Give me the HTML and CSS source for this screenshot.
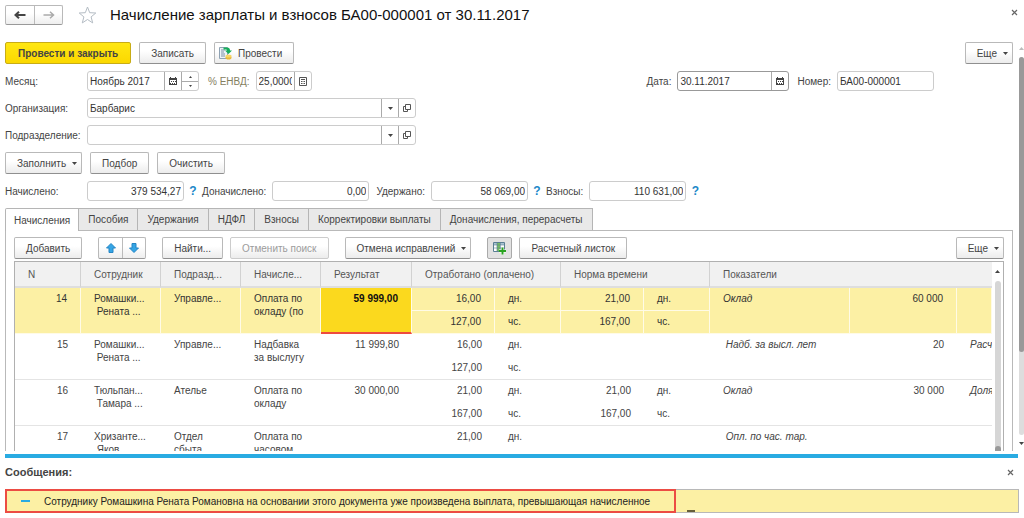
FILE: index.html
```html
<!DOCTYPE html>
<html lang="ru">
<head>
<meta charset="utf-8">
<title>Начисление зарплаты и взносов</title>
<link rel="stylesheet" href="styles.css">
</head>
<body>
<svg class="defs" aria-hidden="true">
  <symbol id="calendar" viewBox="0 0 8 8"><path d="M0 1h8v7H0z" fill="#444"/><path d="M1 0h1v2H1zM6 0h1v2H6z" fill="#444"/><path d="M1 3h6v4H1z" fill="#fff"/><path d="M2 4h1v1H2zM4 4h1v1H4zM6 4h1v1H6zM1 6h1v1H1zM3 6h1v1H3zM5 6h1v1H5z" fill="#444"/></symbol>
  <symbol id="open" viewBox="0 0 8 8"><path d="M2.500 .5h5v5h-5zM2.500 2.500h-2v5h4v-2" fill="none" stroke="#555"/></symbol>
  <symbol id="caret" viewBox="0 0 5 3"><path d="M0 0h5L2.500 3z" fill="#444"/></symbol>
  <symbol id="close" viewBox="0 0 7 7"><path d="M1 1l5 5M6 1L1 6" stroke="#666" stroke-width="1.200"/></symbol>
</svg>
<div class="app">
  <header class="titlebar">
    <div class="pair nav">
      <button type="button" aria-label="Назад"><svg width="12" height="8" viewBox="0 0 12 8"><path d="M11.500 4H2M5 .8L1.500 4 5 7.200" fill="none" stroke="#444" stroke-width="2"/></svg></button>
      <button type="button" aria-label="Вперед"><svg width="12" height="8" viewBox="0 0 12 8"><path d="M.5 4H10M7 .8L10.500 4 7 7.200" fill="none" stroke="#aaa" stroke-width="1.500"/></svg></button>
    </div>
    <button type="button" class="plain star" aria-label="Избранное"><svg width="19" height="18" viewBox="0 0 19 18"><path d="M9.500 1l2.200 5.700 6.100.3-4.700 3.900 1.600 6-5.200-3.400-5.200 3.400 1.600-6L1.200 7l6.100-.3z" fill="#fff" stroke="#b4bcc4"/></svg></button>
    <h1>Начисление зарплаты и взносов БА00-000001 от 30.11.2017</h1>
    <button type="button" class="plain close" aria-label="Закрыть"><svg width="7" height="7"><use href="#close"/></svg></button>
  </header>

  <div class="workspace">
    <main class="form">
      <div class="row commands">
        <button type="button" class="btn primary">Провести и закрыть</button>
        <button type="button" class="btn">Записать</button>
        <button type="button" class="btn post"><svg width="13" height="14" viewBox="0 0 13 14"><path d="M.5 1.500h8v11h-8z" fill="#eef3f7" stroke="#8fa2b3"/><path d="M2 4h4M2 6h3M2 8h4M2 10h4" stroke="#7d91a5"/><path d="M4.500 1.500h3.500q3 0 3 3h2L9.500 8 6 4.500h2q0-1-1-1H4.500z" fill="#16ad5b"/><ellipse cx="9.500" cy="11.500" rx="3" ry="2" fill="#e9b83a"/><ellipse cx="9.500" cy="10" rx="3" ry="1.500" fill="#f7d665"/></svg>Провести</button>
        <button type="button" class="btn more push">Еще<svg width="5" height="3"><use href="#caret"/></svg></button>
      </div>

      <div class="row fields">
        <label class="lead" for="month">Месяц:</label>
        <div class="field month"><input id="month" value="Ноябрь 2017"><button type="button" aria-label="Календарь"><svg width="8" height="8"><use href="#calendar"/></svg></button><div class="spin"><button type="button" aria-label="Больше"><svg width="3" height="2" viewBox="0 0 3 2"><path d="M0 2h3L1.500 0z" fill="#444"/></svg></button><button type="button" aria-label="Меньше"><svg width="3" height="2" viewBox="0 0 3 2"><path d="M0 0h3L1.500 2z" fill="#444"/></svg></button></div></div>
        <label class="tax" for="tax">% ЕНВД:</label>
        <div class="field rate"><input id="tax" value="25,0000"><button type="button" aria-label="Калькулятор"><svg width="8" height="9" viewBox="0 0 8 9"><path d="M.5.5h7v8h-7z" fill="#fff" stroke="#555"/><path d="M2 2h4v1H2zM2 4h1v1H2zM3.500 4h1v1h-1zM5 4h1v1H5zM2 6h1v1H2zM3.500 6h1v1h-1zM5 6h1v1H5z" fill="#555"/></svg></button></div>
        <div class="docid">
          <label for="date">Дата:</label>
          <div class="field date"><input id="date" value="30.11.2017"><button type="button" aria-label="Календарь"><svg width="8" height="8"><use href="#calendar"/></svg></button></div>
          <label for="number">Номер:</label>
          <div class="field number"><input id="number" value="БА00-000001"></div>
        </div>
      </div>

      <div class="row">
        <label class="lead" for="org">Организация:</label>
        <div class="field wide"><input id="org" value="Барбарис"><button type="button" aria-label="Выбрать"><svg width="5" height="3"><use href="#caret"/></svg></button><button type="button" aria-label="Открыть"><svg width="8" height="8"><use href="#open"/></svg></button></div>
      </div>
      <div class="row">
        <label class="lead" for="dept">Подразделение:</label>
        <div class="field wide"><input id="dept"><button type="button" aria-label="Выбрать"><svg width="5" height="3"><use href="#caret"/></svg></button><button type="button" aria-label="Открыть"><svg width="8" height="8"><use href="#open"/></svg></button></div>
      </div>

      <div class="row actions">
        <button type="button" class="btn more">Заполнить<svg width="5" height="3"><use href="#caret"/></svg></button>
        <button type="button" class="btn">Подбор</button>
        <button type="button" class="btn">Очистить</button>
      </div>

      <div class="row totals">
        <label class="lead" for="t1">Начислено:</label>
        <div class="field sum"><input id="t1" value="379 534,27"></div><button type="button" class="plain help">?</button>
        <label for="t2">Доначислено:</label>
        <div class="field sum last"><input id="t2" value="0,00"></div>
        <label for="t3">Удержано:</label>
        <div class="field sum"><input id="t3" value="58 069,00"></div><button type="button" class="plain help">?</button>
        <label for="t4">Взносы:</label>
        <div class="field sum"><input id="t4" value="110 631,00"></div><button type="button" class="plain help">?</button>
      </div>

      <div class="tabs" role="tablist">
        <button type="button" role="tab" aria-selected="true">Начисления</button>
        <button type="button" role="tab">Пособия</button>
        <button type="button" role="tab">Удержания</button>
        <button type="button" role="tab">НДФЛ</button>
        <button type="button" role="tab">Взносы</button>
        <button type="button" role="tab">Корректировки выплаты</button>
        <button type="button" role="tab">Доначисления, перерасчеты</button>
      </div>

      <section class="panel" role="tabpanel">
        <div class="toolbar">
          <button type="button" class="btn">Добавить</button>
          <div class="pair move">
            <button type="button" aria-label="Вверх"><svg width="10" height="10" viewBox="0 0 10 10"><path d="M5 .5L9.500 5H7v4.500H3V5H.5z" fill="#35a5e5" stroke="#2585c4"/></svg></button>
            <button type="button" aria-label="Вниз"><svg width="10" height="10" viewBox="0 0 10 10"><path d="M5 9.500L9.500 5H7V.5H3V5H.5z" fill="#35a5e5" stroke="#2585c4"/></svg></button>
          </div>
          <div class="group">
            <button type="button" class="btn">Найти...</button>
            <button type="button" class="btn" disabled>Отменить поиск</button>
          </div>
          <button type="button" class="btn more">Отмена исправлений<svg width="5" height="3"><use href="#caret"/></svg></button>
          <div class="group">
            <button type="button" class="btn toggle" aria-label="Показать колонки" aria-pressed="true"><svg width="14" height="13" viewBox="0 0 14 13"><path d="M.5.5h11v9H.5z" fill="#fff" stroke="#5a7f94"/><path d="M1 1h10v2H1z" fill="#a9c3d2"/><path d="M4 1h3v8H4z" fill="#76bd62"/><path d="M4 0v10M7.500 0v10M0 3h12M0 6h12" stroke="#5a7f94" stroke-width=".6"/><path d="M9.500 5.500v7M6 9h7" stroke="#fff" stroke-width="3"/><path d="M9.500 5.500v7M6 9h7" stroke="#2aa321" stroke-width="2"/></svg></button>
            <button type="button" class="btn">Расчетный листок</button>
          </div>
          <button type="button" class="btn more push">Еще<svg width="5" height="3"><use href="#caret"/></svg></button>
        </div>

        <div class="grid">
          <div class="gridview">
            <table>
              <colgroup><col class="c-n"><col class="c-name"><col class="c-name"><col class="c-name"><col class="c-result"><col class="c-qty"><col class="c-unit"><col class="c-qty"><col class="c-unit"><col class="c-ind"><col class="c-val"><col></colgroup>
              <thead><tr><th>N</th><th>Сотрудник</th><th>Подразд...</th><th>Начисле...</th><th>Результат</th><th colspan="2">Отработано (оплачено)</th><th colspan="2">Норма времени</th><th colspan="3">Показатели</th></tr></thead>
              <tbody class="selected">
                <tr><td rowspan="2" class="num">14</td><td rowspan="2">Ромашки...<br>&nbsp;Рената ...</td><td rowspan="2">Управле...</td><td rowspan="2">Оплата по<br>окладу (по</td><td rowspan="2" class="num current">59 999,00</td><td class="num">16,00</td><td>дн.</td><td class="num">21,00</td><td>дн.</td><td rowspan="2" class="ind">Оклад</td><td rowspan="2" class="num">60 000</td><td rowspan="2"></td></tr>
                <tr><td class="num">127,00</td><td>чс.</td><td class="num">167,00</td><td>чс.</td></tr>
              </tbody>
              <tbody>
                <tr><td rowspan="2" class="num">15</td><td rowspan="2">Ромашки...<br>&nbsp;Рената ...</td><td rowspan="2">Управле...</td><td rowspan="2">Надбавка<br>за выслугу</td><td rowspan="2" class="num">11 999,80</td><td class="num">16,00</td><td>дн.</td><td></td><td></td><td rowspan="2" class="ind">&nbsp;Надб. за высл. лет</td><td rowspan="2" class="num">20</td><td rowspan="2" class="ind">Расчетный</td></tr>
                <tr><td class="num">127,00</td><td>чс.</td><td></td><td></td></tr>
              </tbody>
              <tbody>
                <tr><td rowspan="2" class="num">16</td><td rowspan="2">Тюльпан...<br>&nbsp;Тамара ...</td><td rowspan="2">Ателье</td><td rowspan="2">Оплата по<br>окладу</td><td rowspan="2" class="num">30 000,00</td><td class="num">21,00</td><td>дн.</td><td class="num">21,00</td><td>дн.</td><td rowspan="2" class="ind">Оклад</td><td rowspan="2" class="num">30 000</td><td rowspan="2" class="ind">Доля</td></tr>
                <tr><td class="num">167,00</td><td>чс.</td><td class="num">167,00</td><td>чс.</td></tr>
              </tbody>
              <tbody>
                <tr><td rowspan="2" class="num">17</td><td rowspan="2">Хризанте...<br>&nbsp;Яков ...</td><td rowspan="2">Отдел<br>сбыта</td><td rowspan="2">Оплата по<br>часовом</td><td rowspan="2"></td><td class="num">21,00</td><td>дн.</td><td></td><td></td><td rowspan="2" class="ind">&nbsp;Опл. по час. тар.</td><td rowspan="2"></td><td rowspan="2"></td></tr>
                <tr><td></td><td></td><td></td><td></td></tr>
              </tbody>
            </table>
          </div>
          <div class="gridscroll"><svg width="5" height="3" viewBox="0 0 5 3"><path d="M0 3h5L2.500 0z" fill="#444"/></svg><div class="track"><div class="thumb"></div></div></div>
        </div>
      </section>
    </main>
    <div class="pagescroll"><svg width="5" height="3" viewBox="0 0 5 3"><path d="M0 3h5L2.500 0z" fill="#bbb"/></svg><div class="track"><div class="thumb"></div></div><svg width="5" height="3"><use href="#caret"/></svg></div>
  </div>

  <div class="splitter"></div>

  <section class="messages">
    <div class="messagehead"><h2>Сообщения:</h2><button type="button" class="plain close" aria-label="Закрыть сообщения"><svg width="7" height="7"><use href="#close"/></svg></button></div>
    <div class="message"><p><span class="dash"></span>Сотруднику Ромашкина Рената Романовна на основании этого документа уже произведена выплата, превышающая начисленное</p><span class="tick"></span></div>
  </section>
</div>
</body>
</html>
```
FILE: styles.css
```css
* { box-sizing: border-box; }
body { margin: 0; background: #fff; color: #444; font: 10px/13px "Liberation Sans", Arial, sans-serif; }
button, input { font: inherit; color: inherit; margin: 0; padding: 0; }
button { display: flex; align-items: center; justify-content: center; background: none; border: 0; white-space: nowrap; }
svg { flex: none; display: block; }
.defs { position: absolute; width: 0; height: 0; }
.app { display: flex; flex-direction: column; height: 100vh; overflow: hidden; }

.titlebar { display: flex; align-items: center; height: 30px; padding: 0 6px 0 5px; flex: none; }
h1 { margin: 0 0 0 13px; font-size: 15px; line-height: 20px; font-weight: 400; color: #111; flex: 1; white-space: nowrap; }
.star { margin-left: 15px; }
.titlebar .close { align-self: flex-start; margin-top: 9px; }

.pair { display: flex; border: 1px solid #b9b9b9; border-radius: 2px; border-bottom-color: #999; background: linear-gradient(#fff 40%, #eee); height: 22px; }
.pair button { width: 23px; }
.pair button + button { border-left: 1px solid #bbb; }
.nav { height: 20px; }
.nav button { width: 28px; }

.workspace { flex: 1; min-height: 0; display: flex; overflow: hidden; margin-bottom: 3px; }
.form { flex: 1; min-width: 0; display: flex; flex-direction: column; padding: 12px 6px 0 5px; }
.row { display: flex; align-items: center; height: 20px; margin-bottom: 7px; flex: none; }
.commands, .actions { height: 22px; gap: 8px; }
.push { margin-left: auto; }

.btn { height: 22px; padding: 0 11px; border: 1px solid #b9b9b9; border-bottom-color: #8f8f8f; border-radius: 2px; background: linear-gradient(#fff 40%, #ececec); flex: none; }
.btn.primary { padding: 0 12px; background: linear-gradient(#ffe712, #fbd800); border-color: #c8ac16; font-weight: 700; }
.btn.more { gap: 6px; padding-right: 4px; }
.btn.post { gap: 6px; padding-left: 4px; }
.btn:disabled { color: #9c9c9c; border-color: #ccc; }
.btn.toggle { width: 25px; padding: 0; background: #e2e2e2; border-color: #aaa; }

.lead { width: 82px; flex: none; white-space: nowrap; }
.field { display: flex; height: 20px; border: 1px solid #ccc; border-radius: 3px; background: #fff; color: #333; }
.field input { flex: 1; width: 0; min-width: 0; border: 0; outline: 0; background: none; padding: 0 2px; }
.field > button { width: 17px; border-left: 1px solid #aaa; }
.month { width: 112px; }
.spin { width: 17px; display: grid; grid-template-rows: 1fr 1fr; border-left: 1px solid #aaa; }
.spin button + button { border-top: 1px solid #aaa; }
.tax { color: #85805f; margin: 0 6px 0 9px; }
.rate { width: 56px; }
.docid { display: flex; align-items: center; margin-left: auto; margin-right: 79px; }
.docid label { margin-right: 6px; }
.date { width: 112px; margin-right: 8px; border-color: #999; }
.number { width: 97px; }
.wide { width: 329px; }
.sum { width: 97px; }
.sum input { text-align: right; }
.sum.last { margin-right: 7px; }
.totals label:not(.lead) { margin-right: 6px; }
.help { width: 18px; color: #2087c8; font-size: 12px; font-weight: 700; }

.tabs { display: flex; flex: none; }
.tabs button { height: 22px; padding: 0 9px; background: #e9e9e9; border: 1px solid #b5b5b5; border-left: 0; border-bottom: 0; }
.tabs button[aria-selected] { padding: 0 8px; background: #fff; border-left: 1px solid #b5b5b5; height: 23px; margin-bottom: -1px; border-radius: 2px 0 0; z-index: 1; }
.panel { flex: none; border: 1px solid #b9b9b9; border-bottom: 0; padding: 6px 8px 0; }
.toolbar { display: flex; gap: 16px; height: 22px; margin-bottom: 2px; }
.group { display: flex; gap: 7px; }

.grid { display: flex; border: 1px solid #b0b0b0; border-bottom: 0; }
.gridview { flex: 1; min-width: 0; overflow: hidden; }
table { width: 100%; table-layout: fixed; border-collapse: separate; border-spacing: 0; }
.c-n, .c-unit { width: 66px; }
.c-name { width: 80px; }
.c-result { width: 91px; }
.c-qty { width: 83px; }
.c-ind { width: 140px; }
.c-val { width: 107px; }
th { height: 26px; padding: 0 0 0 13px; text-align: left; font-weight: 400; color: #555; background: #f1f1f1; border-right: 1px solid #d2d2d2; border-bottom: 2px solid #dedede; white-space: nowrap; }
th:last-child { border-right: 0; }
td { height: 23px; padding: 4px 0 0 13px; vertical-align: top; white-space: nowrap; overflow: hidden; }
td[rowspan] { height: 46px; border-bottom: 1px solid #e4e4e4; }
tr + tr td { border-bottom: 1px solid #e4e4e4; }
.num { text-align: right; padding-left: 0; padding-right: 13px; }
.ind { font-style: italic; }
.selected td { background: #fcf0a4; border-right: 1px solid #fffbe6; border-bottom: 1px solid #fffbe6; color: #333; }
.selected td.current { background: #fbd91e; border-bottom: 2px solid #ee4b3e; font-weight: 700; color: #111; }
.gridscroll { width: 11px; display: flex; flex-direction: column; align-items: center; padding-top: 8px; gap: 8px; }
.gridscroll .track { flex: 1; width: 6px; background: #d6d6d6; border-radius: 3px; }
.gridscroll .thumb { margin-top: 165px; height: 40px; background: #999; border-radius: 3px; }

.pagescroll { width: 5px; display: flex; flex-direction: column; align-items: center; gap: 7px; padding: 17px 0 6px; flex: none; }
.pagescroll .track { flex: 1; width: 5px; background: #ddd; border-radius: 3px; }
.pagescroll .thumb { height: 78%; background: #999; border-radius: 3px; }

.splitter { height: 4px; margin: 0 6px 0 5px; background: #29abe2; flex: none; }
.messages { flex: none; padding: 7px 5px 5px; }
.messagehead { display: flex; justify-content: space-between; align-items: center; height: 15px; margin-bottom: 9px; padding-right: 5px; }
h2 { margin: 0; font-size: 11px; line-height: 15px; }
.message { display: flex; height: 24px; background: #fcf0a4; border: 1px solid #b8b8b8; color: #222; }
.message p { display: flex; align-items: center; margin: -1px; padding: 0 24px 0 14px; border: 2px solid #ec4c43; white-space: nowrap; }
.dash { width: 9px; height: 2px; margin-right: 14px; background: #29abe2; }
.tick { width: 8px; height: 2px; margin-left: 12px; align-self: flex-end; background: #665f3a; }
```
